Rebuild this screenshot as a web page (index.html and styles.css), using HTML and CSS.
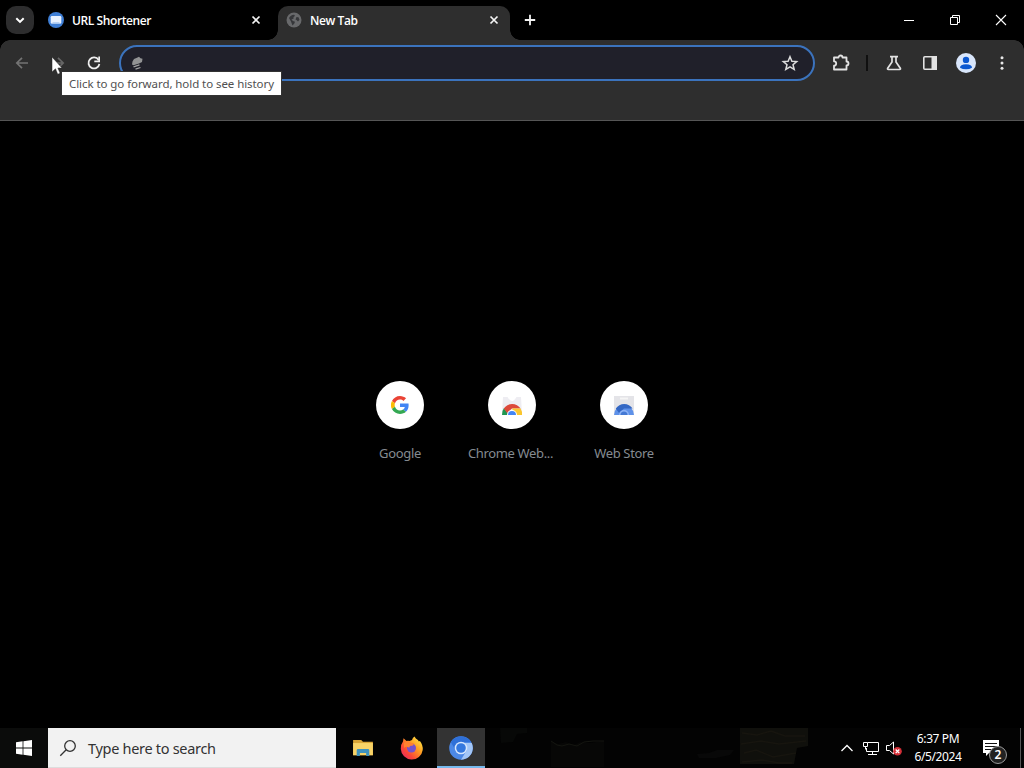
FILE: index.html
```html
<!DOCTYPE html>
<html lang="en">
<head>
<meta charset="utf-8">
<title>New Tab</title>
<link rel="stylesheet" href="styles.css">
</head>
<body>
<header class="tabstrip">
  <button class="tab-search"><svg width="28" height="28" viewBox="0 0 28 28"><path d="M10.300 12.200l3.700 3.700 3.700-3.700" fill="none" stroke="#fff" stroke-width="2"/></svg></button>
  <div class="tab">
    <svg width="16" height="16" viewBox="0 0 16 16"><circle cx="8" cy="8" r="8" fill="#3f7fd6"/><rect x="2.700" y="4" width="10.600" height="7.600" rx="1.200" fill="#e9f2ff"/><path d="M3 11.600l2.400-1.700h5.200l2.400 1.700z" fill="#b9d3f6"/></svg>
    <span class="tab-title title-url">URL Shortener</span>
    <svg class="close" width="16" height="16" viewBox="0 0 16 16"><path d="M4.500 4.500l7 7m0-7l-7 7" stroke="#f4f4f4" stroke-width="1.700"/></svg>
  </div>
  <div class="tab active">
    <svg width="16" height="16" viewBox="0 0 16 16"><circle cx="8" cy="8" r="7.500" fill="#68696b"/><path d="M3 6Q4.500 3 8 2.800l1 1-1.500 1.400v1.600L5.500 7.500l1.500 1.500 2 .8-.8 2-1.700 1.700Q5.500 11 5 9.500zM10.500 5l2 .3 1 2.500-1.500 1.700-1.500-1.500-1-.5z" fill="#36373a"/></svg>
    <span class="tab-title title-new">New Tab</span>
    <svg class="close" width="16" height="16" viewBox="0 0 16 16"><path d="M4.500 4.500l7 7m0-7l-7 7" stroke="#f4f4f4" stroke-width="1.700"/></svg>
  </div>
  <svg class="new-tab" width="16" height="16" viewBox="0 0 16 16"><path d="M8 2.800v10.400M2.800 8h10.400" stroke="#f4f4f4" stroke-width="1.800"/></svg>
  <div class="window-buttons">
    <svg width="46" height="40" viewBox="0 0 46 40"><path d="M18 20.500h10" stroke="#fff"/></svg>
    <svg width="46" height="40" viewBox="0 0 46 40"><path d="M18.500 17.500h7v7h-7zM20.500 17.500v-2h7v7h-2" fill="none" stroke="#fff"/></svg>
    <svg width="46" height="40" viewBox="0 0 46 40"><path d="M18 15l10 10m0-10l-10 10" stroke="#fff" stroke-width="1.100"/></svg>
  </div>
</header>
<section class="chrome">
  <div class="toolbar">
    <nav class="nav">
      <svg width="20" height="20" viewBox="0 0 20 20"><path d="M16 10H5M10 4.800L4.800 10l5.200 5.200" fill="none" stroke="#737373" stroke-width="1.700"/></svg>
      <svg width="20" height="20" viewBox="0 0 20 20"><path d="M4 10h11M10 4.800l5.200 5.200-5.200 5.200" fill="none" stroke="#666" stroke-width="1.700"/></svg>
      <svg width="20" height="20" viewBox="0 0 20 20"><path d="M14.600 6.900A5.500 5.500 0 1 0 15.400 11" fill="none" stroke="#eee" stroke-width="1.800"/><path d="M16 3.500v5.700h-5.700V7.500h4V3.500z" fill="#eee"/></svg>
    </nav>
    <div class="omnibox">
      <svg width="16" height="16" viewBox="0 0 16 16"><path d="M5 4l3.500-1.500 1.500-.8 1.500 1.500 2 .5-.5 3.300-3 1.500L4.500 10.200 3 9.500l.5-3z" fill="#929394"/><path d="M4.500 11.800l6-2M6.500 14.200l5-1.700" stroke="#a0a1a1" stroke-width="1.300"/></svg>
      <svg width="20" height="20" viewBox="0 0 20 20"><path d="M10 3.700l1.900 4.500 4.800.4-3.700 3.100 1.200 4.700-4.200-2.500-4.200 2.500L7 11.700 3.300 8.600l4.800-.4z" fill="none" stroke="#ddd" stroke-width="1.500"/></svg>
    </div>
    <div class="actions">
      <svg width="20" height="20" viewBox="0 0 20 20"><path d="M3 4.500h4.500a2 2 0 0 1 4 0H15.500v4a2 2 0 0 1 0 4v4H3v-3.800a2.200 2.200 0 0 0 0-4.400z" fill="none" stroke="#e2e2e2" stroke-width="1.800" stroke-linejoin="round"/></svg>
      <i class="divider"></i>
      <svg width="20" height="20" viewBox="0 0 20 20"><path d="M6 3.600h8M8 4v5l-4.300 6.200q-.6 1.300.7 1.300h11.200q1.300 0 .7-1.300L12 9V4" fill="none" stroke="#e2e2e2" stroke-width="1.700"/></svg>
      <svg width="20" height="20" viewBox="0 0 20 20"><rect x="3.800" y="3.800" width="12.400" height="12.400" rx="1" fill="none" stroke="#e2e2e2" stroke-width="1.600"/><path d="M11.500 3h5.500v14h-5.500z" fill="#e2e2e2"/></svg>
      <svg width="20" height="20" viewBox="0 0 20 20"><circle cx="10" cy="10" r="10" fill="#d9e6fb"/><circle cx="10" cy="6.900" r="3.200" fill="#0b57d0"/><path d="M4 14.700q0-3.500 6-3.500t6 3.500q-2.500 1.500-6 1.500t-6-1.500z" fill="#0b57d0"/></svg>
      <svg width="20" height="20" viewBox="0 0 20 20"><g fill="#e8e8e8"><circle cx="10" cy="4.800" r="1.500"/><circle cx="10" cy="10" r="1.500"/><circle cx="10" cy="15.200" r="1.500"/></g></svg>
    </div>
  </div>
</section>
<main class="page">
  <div class="tile">
    <div class="disc"><svg width="18" height="18" viewBox="0 0 48 48"><path fill="#ea4335" d="M24 9.500c3.500 0 6.700 1.200 9.200 3.600l6.900-6.900C35.900 2.400 30.500 0 24 0 14.600 0 6.500 5.400 2.600 13.200l8 6.200C12.400 13.700 17.700 9.500 24 9.500z"/><path fill="#4285f4" d="M47 24.600c0-1.600-.2-3.100-.4-4.600H24v9h12.900c-.6 3-2.300 5.500-4.800 7.200l7.700 6C44.400 38 47 31.800 47 24.600z"/><path fill="#fbbc05" d="M10.500 28.600a14.500 14.500 0 0 1 0-9.200l-8-6.200a24 24 0 0 0 0 21.600z"/><path fill="#34a853" d="M24 48c6.500 0 11.900-2.100 15.900-5.800l-7.700-6c-2.200 1.500-4.900 2.300-8.200 2.300-6.300 0-11.600-4.200-13.500-9.900l-8 6.200C6.500 42.600 14.600 48 24 48z"/></svg></div>
    <span>Google</span>
  </div>
  <div class="tile tile-cws">
    <div class="disc"><svg width="24" height="24" viewBox="0 0 24 24"><path d="M3 4h18l1 17H2z" fill="#eeedf2"/><path d="M7 3q5 10 10 0" fill="#fff"/><path d="M2 22a10 10 0 0 1 2-7l5 7z" fill="#209650"/><path d="M3.800 15.500a10 10 0 0 1 16.800 0H12L7 20z" fill="#dc493a"/><path d="M12 15.500h8.600A10 10 0 0 1 22 22h-7z" fill="#fbc62d"/><path d="M7 22a5 5 0 0 1 10 0z" fill="#fff"/><path d="M8 22a4 4 0 0 1 8 0z" fill="#4285f4"/></svg></div>
    <span>Chrome Web...</span>
  </div>
  <div class="tile">
    <div class="disc"><svg width="24" height="24" viewBox="0 0 24 24"><path d="M2 3h20v19H2z" fill="#e4e4e8"/><path d="M8 5.500h8" stroke="#f5f5f5" stroke-width="2"/><path d="M2 22a10 10 0 0 1 20 0z" fill="#5e91e9"/><path d="M3.800 15.500a10 10 0 0 1 16.800 0H12L7 20z" fill="#3367c4"/><path d="M7 22a5 5 0 0 1 10 0z" fill="#8eb4f7"/><path d="M8.500 22a3.500 3.500 0 0 1 7 0z" fill="#4479d4"/></svg></div>
    <span>Web Store</span>
  </div>
</main>
<footer class="taskbar">
  <div class="start"><svg width="16" height="16" viewBox="0 0 16 16"><path d="M0 2.300l6.600-1v6.200H0zM7.400 1.200L16 0v7.500H7.400zM0 8.400h6.600v6.300l-6.600-1zM7.400 8.400H16V16l-8.600-1.200z" fill="#fff"/></svg></div>
  <div class="search"><svg width="18" height="18" viewBox="0 0 18 18"><circle cx="11" cy="7" r="5.300" fill="none" stroke="#333" stroke-width="1.300"/><path d="M7.200 10.800L1.300 16.700" stroke="#333" stroke-width="1.300"/></svg><span>Type here to search</span></div>
  <div class="apps">
    <div class="app app-files"><svg width="22" height="18" viewBox="0 0 24 20"><path d="M1 1h9l2 2h11v15H1z" fill="#d9a536"/><path d="M1 4.500h22V18H1z" fill="#f8d367"/><path d="M5 12.500q0-1.500 1.500-1.500h11q1.500 0 1.500 1.500V19h-3.500v-3.500h-7V19H5z" fill="#3f92bd"/></svg></div>
    <div class="app app-fox"><svg width="24" height="24" viewBox="0 0 24 24"><defs><linearGradient id="flame" x1="1" y1="0" x2="0" y2="1"><stop offset=".05" stop-color="#fff04a"/><stop offset=".38" stop-color="#ffa023"/><stop offset=".7" stop-color="#fa4538"/><stop offset="1" stop-color="#e32171"/></linearGradient></defs><path d="M14.500.5q1 2 3.400 3.600l1 1.300 1-.5q3.300 4.200 2.800 9A11 11 0 0 1 .8 13Q.5 8.500 3 5.500L3.500 2.200 6.500 5q1.500-.5 3 0L12 4q.5-2.500 2.500-3.500z" fill="url(#flame)"/><circle cx="11.500" cy="12" r="4.500" fill="#7552cc"/><path d="M4 7q4-3 7-.2l3 .8-1 2-3 .3-.8 1.800Q6 9.800 4 12z" fill="#ff8130"/></svg></div>
    <div class="app current"><svg width="24" height="24" viewBox="0 0 24 24"><circle cx="12" cy="12" r="11.800" fill="#4c88e6"/><path d="M1.800 6A11.800 11.800 0 0 1 22.200 6H12L7 15z" fill="#2f70d8"/><path d="M16 7h6.700A11.800 11.800 0 0 1 12 23.800l5.500-9z" fill="#a3c6f7"/><circle cx="12" cy="12" r="6.300" fill="#d6e6fd"/><circle cx="12" cy="12" r="4.800" fill="#3478df"/></svg></div>
  </div>
  <svg class="wallpaper" width="340" height="40" viewBox="0 0 340 40"><path d="M10 0h27v5l-10 1-4 8-12 1z" fill="#070807"/><path d="M61 13l7 3 8-2 8 3 6-3 10 1 12-2h2v26H61z" fill="#070706"/><path d="M61 13l6 4 5 1 7-2 8 2 7-4 9-1h11" fill="none" stroke="#141510"/><path d="M207 26l12-1 8-3h17l-4 5-14 3h-17z" fill="#080808"/><path d="M250 0h68v18l-11 2-3 16H250z" fill="#10100c"/><path d="M252 5l15 2 14-4 14 5h20M251 16l20-3 18 3 27-3M254 25l12-3 17 7 23-4M252 34l20-2 17 3h13" fill="none" stroke="#17150f" stroke-width="1.500"/></svg>
  <div class="tray">
    <svg width="16" height="16" viewBox="0 0 16 16"><path d="M2.500 11L8 5.500l5.500 5.500" fill="none" stroke="#fff" stroke-width="1.300"/></svg>
    <svg width="18" height="16" viewBox="0 0 18 16"><path d="M5.500 2.500h11v9h-12V8M10.500 11.500v3M6 14.500h9" fill="none" stroke="#fff"/><path d="M1.500 2.500h4v4h-4zM3.500 6.500v3" fill="none" stroke="#fff"/></svg>
    <svg width="18" height="16" viewBox="0 0 18 16"><path d="M1.500 5.500h3L8.500 2v12l-4-3.500h-3z" fill="none" stroke="#fff"/><circle cx="12.500" cy="11.300" r="4.300" fill="#d52f38"/><path d="M10.700 9.500l3.600 3.600m0-3.600l-3.600 3.600" stroke="#fff" stroke-width="1.300"/></svg>
  </div>
  <div class="clock"><span class="time">6:37 PM</span><span class="date">6/5/2024</span></div>
  <div class="notice"><svg width="18" height="18" viewBox="0 0 18 18"><path d="M1 0h16v13H7l-3 3v-3H1z" fill="#fff"/><path d="M3 3.500h12M3 6.500h12M3 9.500h9" stroke="#111"/></svg><b>2</b></div>
</footer>
<div class="tooltip">Click to go forward, hold to see history</div>
<svg class="pointer" width="13" height="20" viewBox="0 0 13 20"><path d="M1 1v15l3.500-3.200 2.200 5.500 2.400-1-2.200-5.300H11z" fill="#fff" stroke="#222" stroke-width=".5"/></svg>
</body>
</html>
```
FILE: styles.css
```css
* { box-sizing: border-box; }
body {
  margin: 0;
  width: 1024px;
  height: 768px;
  overflow: hidden;
  display: flex;
  flex-direction: column;
  background: #000;
  color: #fff;
  font-family: "Noto Sans", "Open Sans", sans-serif;
}
svg { display: block; flex: none; }
.tabstrip { display: flex; align-items: center; height: 40px; padding-left: 6px; flex: none; }
.tab-search { width: 28px; height: 28px; padding: 0; border: 0; border-radius: 10px; background: #2d2d2e; }
.tab { display: flex; align-items: center; width: 244px; height: 40px; padding: 0 14px; }
.tab-title { margin-left: 8px; padding-top: 2px; font: 600 12px/16px "Open Sans", sans-serif; white-space: nowrap; }
.title-url { letter-spacing: -0.4px; }
.title-new { letter-spacing: -0.4px; }
.close { margin-left: auto; }
.tab.active { position: relative; width: 232px; height: 34px; margin-top: 6px; padding: 0 8px 6px; border-radius: 10px 10px 0 0; background: #2e2e2e; }
.tab.active::before, .tab.active::after { content: ""; position: absolute; bottom: 0; width: 10px; height: 10px; }
.tab.active::before { left: -10px; background: radial-gradient(circle at 0 0, transparent 9.5px, #2e2e2e 10px); }
.tab.active::after { right: -10px; background: radial-gradient(circle at 100% 0, transparent 9.5px, #2e2e2e 10px); }
.new-tab { margin-left: 12px; }
.window-buttons { display: flex; margin-left: auto; }
.chrome { height: 81px; flex: none; border-bottom: 1px solid #555; background: linear-gradient(#2e2e2e, #2e2e2e) 0 10px no-repeat, radial-gradient(circle at 10px 10px, #2e2e2e 9.5px, transparent 10px) 0 0 / 10px 10px no-repeat, radial-gradient(circle at 0 10px, #2e2e2e 9.5px, transparent 10px) 100% 0 / 10px 10px no-repeat, linear-gradient(#2e2e2e, #2e2e2e) 10px 0 / 1004px 10px no-repeat; }
.toolbar { display: flex; align-items: center; height: 46px; padding: 0 12px; }
.nav { display: flex; gap: 16px; }
.omnibox { display: flex; align-items: center; justify-content: space-between; width: 696px; height: 36px; margin-left: 15px; padding: 0 13px 0 8px; border: 2px solid #3b73bd; border-radius: 18px; background: #20202a; }
.actions { display: flex; align-items: center; gap: 16px; margin-left: 16px; }
.divider { width: 2px; height: 16px; margin: 0 0 0 -1px; background: #101010; }
.page { display: flex; justify-content: center; flex: 1; padding-top: 260px; }
.tile { width: 112px; display: flex; flex-direction: column; align-items: center; font-size: 13px; letter-spacing: -0.35px; line-height: 18px; color: #858b91; white-space: nowrap; }
.tile span { margin-top: 15px; }
.tile-cws span { margin-left: -3px; }
.disc { display: flex; align-items: center; justify-content: center; width: 48px; height: 48px; border-radius: 50%; background: #fff; }
.taskbar { display: flex; height: 40px; flex: none; background: #030303; }
.start { display: flex; align-items: center; justify-content: center; width: 48px; background: #0b0c0b; }
.search { display: flex; align-items: center; gap: 11px; width: 288px; padding-left: 11px; background: #f2f2f2; border: 1px solid #ddd; border-width: 0 0 1px; color: #333; font-size: 14.5px; letter-spacing: -0.3px; }
.apps { display: flex; }
.app { display: flex; align-items: center; justify-content: center; width: 48px; }
.app-files { width: 53px; }
.app-fox { padding-right: 2px; }
.current { background: #333; border-bottom: 2px solid #76b9ed; }
.current svg { margin-top: 2px; }
.wallpaper { margin-left: 5px; }
.tray { display: flex; align-items: center; gap: 7px; margin-left: 9px; }
.tray svg:last-child { margin-left: -2px; }
.clock { display: flex; flex-direction: column; align-items: center; width: 70px; padding-top: 2px; font-size: 12px; letter-spacing: -0.4px; line-height: 18px; white-space: nowrap; }
.notice { position: relative; width: 48px; border-right: 1px solid #555; padding: 12px 0 0 9px; }
.notice b { position: absolute; left: 16px; top: 18px; width: 18px; height: 18px; border: 1px solid #999; border-radius: 50%; background: #222; font: 600 12px/16px "Noto Sans", sans-serif; text-align: center; }
.tooltip { position: absolute; left: 61px; top: 71px; width: 221px; height: 25px; border: 1px solid #333; background: #fff; color: #505050; font-size: 11.5px; letter-spacing: -0.07px; line-height: 23px; text-align: center; white-space: nowrap; }
.pointer { position: absolute; left: 51px; top: 56px; }
```
